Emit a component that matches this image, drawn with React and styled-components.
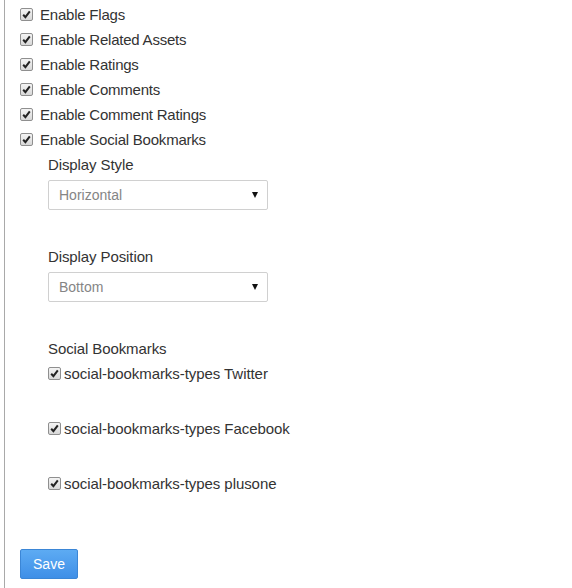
import React from "react";
import styled, { createGlobalStyle } from "styled-components";

const Global = createGlobalStyle`
  html, body { margin: 0; padding: 0; background: #fff; }
  body { font-family: "Liberation Sans", Arial, sans-serif; color: #333; }
`;

const Page = styled.div`
  width: 572px;
  height: 588px;
  box-sizing: border-box;
  padding-left: 4px;
  overflow: hidden;
`;

const Panel = styled.div`
  height: 100%;
  border-left: 1px solid #a9a9a9;
  box-shadow: 1px 0 0 #e2e2e2;
  box-sizing: border-box;
  padding: 2px 0 0 15px;
  display: flex;
  flex-direction: column;
`;

const Row = styled.label`
  display: flex;
  align-items: center;
  height: 25px;
  gap: ${(p) => p.$gap || 7}px;
  font-size: 15px;
  letter-spacing: ${(p) => p.$tight || 0}px;
  color: #333;
  margin-bottom: ${(p) => p.$after || 0}px;
`;

const Box = styled.span`
  width: 11px;
  height: 11px;
  border: 1px solid #8f8f8f;
  border-radius: 2px;
  background: linear-gradient(#f4f4f4, #d8d8d8);
  display: flex;
  align-items: center;
  justify-content: center;
  flex: none;
`;

const Nested = styled.div`
  padding-left: 28px;
  display: flex;
  flex-direction: column;
`;

const Label = styled.div`
  height: 25px;
  line-height: 25px;
  font-size: 15px;
  letter-spacing: -0.1px;
  color: #333;
`;

const Select = styled.div`
  width: 220px;
  height: 30px;
  box-sizing: border-box;
  margin-top: 2.5px;
  margin-bottom: 34.5px;
  border: 1px solid #d0d0d0;
  border-radius: 2px;
  display: flex;
  align-items: center;
  justify-content: space-between;
  padding: 0 9px 0 10px;
  font-size: 14px;
  color: #858585;
`;

const Arrow = styled.span`
  width: 0;
  height: 0;
  border-left: 3px solid transparent;
  border-right: 3px solid transparent;
  border-top: 6px solid #111;
`;

const Button = styled.button`
  width: 58px;
  height: 30px;
  margin-top: ${(p) => p.$top || 0}px;
  border: 1px solid #3b86d6;
  border-radius: 2px;
  background: linear-gradient(#5dabf3, #3f8fe7);
  color: #fff;
  font-family: "Liberation Sans", Arial, sans-serif;
  font-size: 14px;
  padding: 0;
`;

const Check = () => (
  <Box>
    <svg width="9" height="9" viewBox="0 0 9 9">
      <path d="M1.2 4.8 L3.4 7.2 L7.8 1.4" fill="none" stroke="#222" strokeWidth="2" />
    </svg>
  </Box>
);

const enables = [
  "Enable Flags",
  "Enable Related Assets",
  "Enable Ratings",
  "Enable Comments",
  "Enable Comment Ratings",
  "Enable Social Bookmarks",
];

const bookmarks = ["Twitter", "Facebook", "plusone"];

export default function App() {
  return (
    <>
      <Global />
      <Page>
        <Panel>
          {enables.map((t) => (
            <Row key={t} $tight={-0.22}>
              <Check />
              {t}
            </Row>
          ))}
          <Nested>
            <Label>Display Style</Label>
            <Select>
              Horizontal
              <Arrow />
            </Select>
            <Label>Display Position</Label>
            <Select>
              Bottom
              <Arrow />
            </Select>
            <Label>Social Bookmarks</Label>
            {bookmarks.map((b, i) => (
              <Row key={b} $gap={3} $tight={-0.06} $after={i < bookmarks.length - 1 ? 30 : 0}>
                <Check />
                social-bookmarks-types {b}
              </Row>
            ))}
          </Nested>
          <div>
            <Button $top={52.5}>Save</Button>
          </div>
        </Panel>
      </Page>
    </>
  );
}
